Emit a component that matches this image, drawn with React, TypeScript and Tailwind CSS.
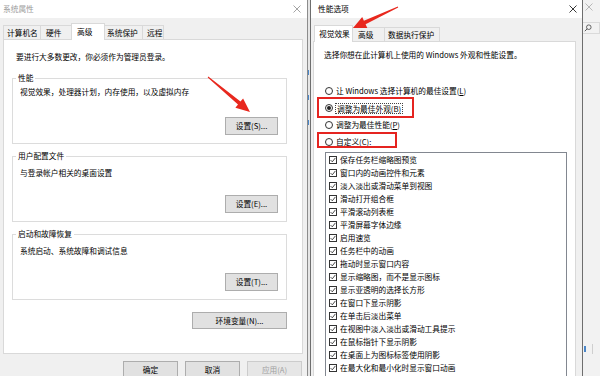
import React from "react";

const font = "font-['Noto_Sans_CJK_SC','Noto_Sans',sans-serif]";

type TabDef = { label: string; cls: string; active?: boolean };

const sysTabs: TabDef[] = [
  { label: "计算机名", cls: "w-[38px] pl-[3px] border-l" },
  { label: "硬件", cls: "w-[31px] pl-[5px]" },
  { label: "高级", cls: "w-[34px] pl-[5px]", active: true },
  { label: "系统保护", cls: "w-[38px] pl-[2px]" },
  { label: "远程", cls: "w-[21px] pl-[4px]" },
];

const perfTabs: TabDef[] = [
  { label: "视觉效果", cls: "w-[39px] pl-[4px]", active: true },
  { label: "高级", cls: "w-[32px] pl-[5px]" },
  { label: "数据执行保护", cls: "w-[55px] pl-[3px]" },
];

const effects = [
  "保存任务栏缩略图预览",
  "窗口内的动画控件和元素",
  "淡入淡出或滑动菜单到视图",
  "滑动打开组合框",
  "平滑滚动列表框",
  "平滑屏幕字体边缘",
  "启用速览",
  "任务栏中的动画",
  "拖动时显示窗口内容",
  "显示缩略图，而不是显示图标",
  "显示亚透明的选择长方形",
  "在窗口下显示阴影",
  "在单击后淡出菜单",
  "在视图中淡入淡出或滑动工具提示",
  "在鼠标指针下显示阴影",
  "在桌面上为图标标签使用阴影",
  "在最大化和最小化时显示窗口动画",
];

function CloseIcon({ className }: { className?: string }) {
  return (
    <svg width="8" height="8" viewBox="0 0 8 8" className={className}>
      <path d="M0.5 0.5L7.5 7.5M7.5 0.5L0.5 7.5" stroke="currentColor" strokeWidth="0.9" />
    </svg>
  );
}

function Tabs({ tabs }: { tabs: TabDef[] }) {
  return (
    <>
      {tabs.map((t) =>
        t.active ? (
          <div
            key={t.label}
            className={`relative z-10 -mb-px -ml-px flex h-[17px] items-center border-l border-r border-t border-[#d9d9d9] bg-white ${t.cls}`}
          >
            {t.label}
          </div>
        ) : (
          <div
            key={t.label}
            className={`flex h-[14px] items-center border-r border-t border-[#d9d9d9] bg-[#f0f0f0] ${t.cls}`}
          >
            {t.label}
          </div>
        )
      )}
    </>
  );
}

function WinButton({ label, className }: { label: string; className: string }) {
  return (
    <div className={`flex items-center justify-center border border-[#adadad] bg-[#e1e1e1] ${className}`}>
      {label}
    </div>
  );
}

function GroupBox({
  title,
  text,
  button,
  className,
  textPad,
}: {
  title: string;
  text: string;
  button: string;
  className: string;
  textPad: string;
}) {
  return (
    <div className={`relative flex h-[66px] flex-col border border-[#dcdcdc] ${className}`}>
      {/* 标题压在边框上 */}
      <span className="absolute -top-[6px] left-[3px] bg-white px-[2px]">{title}</span>
      <p className={`pl-[7px] ${textPad}`}>{text}</p>
      <WinButton label={button} className="mb-[8px] mr-[8px] mt-auto h-[18px] w-[53px] self-end" />
    </div>
  );
}

function SystemProperties() {
  return (
    <div className="absolute left-0 top-0 flex h-[392px] w-[308px] flex-col border-r border-[#8c8c8c] bg-[#f0f0f0]">
      <div className="flex h-[18px] items-center justify-between bg-white pl-[3px] pr-[6px] text-[#9a9a9a]">
        <span>系统属性</span>
        <CloseIcon className="text-[#9a9a9a]" />
      </div>
      <div className="flex flex-col pl-[3px] pr-[4px] pt-[5px]">
        <div className="flex h-[16px] items-end">
          <Tabs tabs={sysTabs} />
        </div>
        <div className="flex h-[315px] flex-col border border-[#d9d9d9] bg-white pl-[8px] pr-[15px] pt-[12px]">
          <p className="pl-[4px]">要进行大多数更改，你必须作为管理员登录。</p>
          <GroupBox
            title="性能"
            text="视觉效果，处理器计划，内存使用，以及虚拟内存"
            button="设置(S)..."
            className="mt-[16px]"
            textPad="pt-[8px]"
          />
          <GroupBox
            title="用户配置文件"
            text="与登录帐户相关的桌面设置"
            button="设置(E)..."
            className="mt-[12px]"
            textPad="pt-[11px]"
          />
          <GroupBox
            title="启动和故障恢复"
            text="系统启动、系统故障和调试信息"
            button="设置(T)..."
            className="mt-[12px]"
            textPad="pt-[11px]"
          />
          <WinButton label="环境变量(N)..." className="mt-[12px] h-[17px] w-[95px] self-end" />
        </div>
        <div className="mt-[7px] flex justify-end gap-[7px] pr-[1px]">
          <WinButton label="确定" className="h-[18px] w-[55px]" />
          <WinButton label="取消" className="h-[18px] w-[55px]" />
          <WinButton label="应用(A)" className="h-[18px] w-[55px] border-[#cccccc] bg-[#e6e6e6] text-[#a0a0a0]" />
        </div>
      </div>
    </div>
  );
}

function Radio({ checked }: { checked?: boolean }) {
  return (
    <span className="flex h-[8px] w-[8px] shrink-0 items-center justify-center rounded-full border border-[#333] bg-white">
      {checked && <span className="h-[4px] w-[4px] rounded-full bg-[#222]" />}
    </span>
  );
}

function CheckBox() {
  return (
    <span className="flex h-[8px] w-[8px] shrink-0 items-center justify-center border border-[#333] bg-white">
      <svg width="6" height="6" viewBox="0 0 6 6">
        <path d="M0.6 3.1L2.3 4.8L5.4 0.9" fill="none" stroke="#333" strokeWidth="0.9" />
      </svg>
    </span>
  );
}

function PerformanceOptions() {
  return (
    <div className="absolute left-[310px] top-0 flex h-[392px] w-[273px] flex-col border-x border-[#6e6e6e] bg-[#f0f0f0]">
      <div className="flex h-[18px] items-center justify-between bg-white pl-[7px] pr-[5px]">
        <span>性能选项</span>
        <CloseIcon className="text-[#222]" />
      </div>
      <div className="flex flex-col pl-[2px] pr-[6px] pt-[7px]">
        <div className="flex h-[16px] items-end pl-[2px]">
          <Tabs tabs={perfTabs} />
        </div>
        <div className="flex h-[345px] flex-col border border-[#d9d9d9] bg-white pl-[10px] pt-[8px]">
          <p>选择你想在此计算机上使用的 Windows 外观和性能设置。</p>
          <div className="ml-[1px] mt-[26px] flex flex-col gap-[7px]">
            <label className="flex h-[10px] items-center gap-[3px]">
              <Radio />
              <span>
                让 Windows 选择计算机的最佳设置(<span className="underline">L</span>)
              </span>
            </label>
            <label className="flex h-[10px] items-center gap-[2px]">
              <Radio checked />
              <span className="border border-dotted border-[#444] px-[1px] leading-[9px]">调整为最佳外观(B)</span>
            </label>
            <label className="flex h-[10px] items-center gap-[3px]">
              <Radio />
              <span>
                调整为最佳性能(<span className="underline">P</span>)
              </span>
            </label>
            <label className="flex h-[10px] items-center gap-[3px]">
              <Radio />
              <span>
                自定义(<span className="underline">C</span>):
              </span>
            </label>
          </div>
          <div className="ml-[1px] mt-[5px] w-[242px] flex-1 border border-[#828790] pl-[3px]">
            {effects.map((e) => (
              <div key={e} className="flex h-[13px] items-center gap-[3px]">
                <CheckBox />
                <span>{e}</span>
              </div>
            ))}
          </div>
        </div>
      </div>
    </div>
  );
}

function BackWindowEdge() {
  return (
    <>
      {/* 两个窗口之间露出的后方窗口 */}
      <div className="absolute left-[308px] top-[70px] h-[5px] w-px bg-[#4a86c8]" />
      <div className="absolute left-[308px] top-[95px] h-[5px] w-px bg-[#4a86c8]" />
      <div className="absolute left-[308px] top-[120px] h-[5px] w-px bg-[#4a86c8]" />
      <div className="absolute left-[583px] top-0 h-[376px] w-[17px] bg-[#f2f2f2]">
        <CloseIcon className="absolute left-[2px] top-[3px] text-[#b0b0b0]" />
        <div className="absolute left-0 top-[22px] h-[12px] w-[17px] border border-l-0 border-[#dadada]">
          <svg width="8" height="8" viewBox="0 0 8 8" className="absolute left-[1px] top-[1px]">
            <circle cx="4.8" cy="3.2" r="2.3" fill="none" stroke="#444" strokeWidth="0.8" />
            <path d="M3.2 4.8L0.8 7.2" stroke="#444" strokeWidth="0.9" />
          </svg>
        </div>
        <div className="absolute left-[1px] top-[346px] h-[6px] w-[2px] bg-[#4a86c8]" />
        <div className="absolute left-[9px] top-[344px] h-[10px] w-px bg-[#cfcfcf]" />
      </div>
    </>
  );
}

function Annotations() {
  return (
    <>
      <div className="absolute left-[317px] top-[97px] h-[21px] w-[97px] border-2 border-[#e52420]" />
      <div className="absolute left-[317px] top-[132px] h-[16px] w-[80px] border-2 border-[#e52420]" />
      <svg width="600" height="376" className="pointer-events-none absolute left-0 top-0">
        <polygon
          fill="#e8281e"
          points="207.7,77.4 238,104.6 235.4,107.7 250,112 243.1,98.4 240.5,101.5 208.3,76.6"
        />
        <polygon
          fill="#e8281e"
          points="397.8,6.6 363.9,20.7 362.2,17.1 353,28 367.3,27.9 365.6,24.3 398.2,7.5"
        />
      </svg>
    </>
  );
}

export default function App() {
  return (
    <div className={`relative h-[376px] w-[600px] overflow-hidden bg-[#e6e6e6] text-[7.7px] leading-[10px] text-black ${font}`}>
      <SystemProperties />
      <PerformanceOptions />
      <BackWindowEdge />
      <Annotations />
    </div>
  );
}
